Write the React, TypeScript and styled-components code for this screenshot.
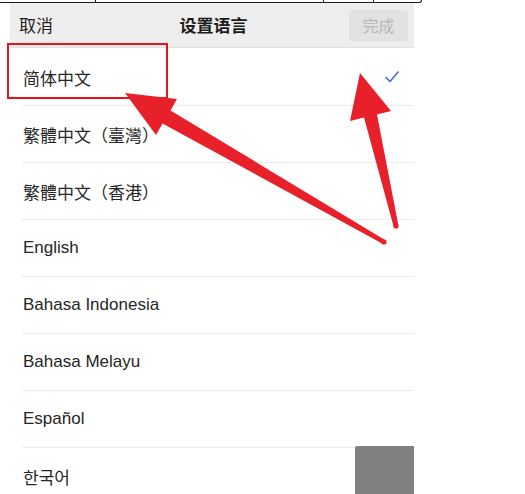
import React from "react";
import styled, { createGlobalStyle } from "styled-components";

const Global = createGlobalStyle`
  html, body { margin: 0; padding: 0; background: #ffffff; overflow: hidden; }
  body { font-family: "Liberation Sans", "Noto Sans CJK SC", "Noto Sans CJK KR", sans-serif; }
`;

const Page = styled.div`
  position: relative;
  width: 525px;
  height: 494px;
  overflow: hidden;
  display: flex;
  flex-direction: column;
`;

const TopRule = styled.div`
  display: flex;
  width: 422px;
  height: 3px;
  flex-shrink: 0;
`;

const RuleCell = styled.div<{ $w: number; $last?: boolean }>`
  width: ${(p) => p.$w}px;
  box-sizing: border-box;
  border-bottom: 1px solid #1e1e1e;
  border-right: 1px solid #1e1e1e;
  border-bottom-right-radius: ${(p) => (p.$last ? "4px" : "0")};
`;

const Screen = styled.div`
  margin-left: 10px;
  width: 404px;
  display: flex;
  flex-direction: column;
`;

const Header = styled.div`
  height: 45px;
  box-sizing: border-box;
  background: #eeeeee;
  border-bottom: 1px solid #e0e0e0;
  display: grid;
  grid-template-columns: 1fr auto 1fr;
  align-items: center;
  padding: 0 6px 2px 9px;
`;

const Cancel = styled.span`
  font-size: 17px;
  color: #222;
  justify-self: start;
`;

const Title = styled.span`
  font-size: 17px;
  font-weight: 700;
  color: #1c1c1c;
`;

const DoneButton = styled.span`
  justify-self: end;
  width: 59px;
  height: 31px;
  margin-top: 2px;
  border-radius: 4px;
  background: #e2e2e2;
  color: #b9b9b9;
  font-size: 16px;
  display: flex;
  align-items: center;
  justify-content: center;
`;

const List = styled.div`
  display: flex;
  flex-direction: column;
  margin-top: 1px;
`;

const Row = styled.div`
  height: 56px;
  margin-left: 12px;
  padding: 0 15px 0 1px;
  border-bottom: 1px solid #ececec;
  display: flex;
  align-items: center;
  justify-content: space-between;
  font-size: 17px;
  color: #262626;
`;

const Overlay = styled.svg`
  position: absolute;
  left: 0;
  top: 0;
  pointer-events: none;
`;

const FloatSquare = styled.div`
  position: absolute;
  left: 355px;
  top: 446px;
  width: 59px;
  height: 60px;
  background: #808080;
  border-top-left-radius: 2px;
`;

const languages = [
  "简体中文",
  "繁體中文（臺灣）",
  "繁體中文（香港）",
  "English",
  "Bahasa Indonesia",
  "Bahasa Melayu",
  "Español",
  "한국어",
];

const Check = () => (
  <svg width="14" height="12" viewBox="0 0 14 12">
    <path d="M1 6.5 L5 10.5 L13 1" fill="none" stroke="#3d6fd6" strokeWidth="1.6" strokeLinecap="round" strokeLinejoin="round" />
  </svg>
);

export default function App() {
  return (
    <>
      <Global />
      <Page>
        <TopRule>
          <RuleCell $w={96} />
          <RuleCell $w={228} />
          <RuleCell $w={50} />
          <RuleCell $w={48} $last />
        </TopRule>
        <Screen>
          <Header>
            <Cancel>取消</Cancel>
            <Title>设置语言</Title>
            <DoneButton>完成</DoneButton>
          </Header>
          <List>
            {languages.map((l, i) => (
              <Row key={l}>
                <span>{l}</span>
                {i === 0 && <Check />}
              </Row>
            ))}
          </List>
        </Screen>
        <FloatSquare />
        <Overlay width="525" height="494" viewBox="0 0 525 494">
          <rect x="8" y="44" width="159" height="54" fill="none" stroke="#e8141c" strokeWidth="2" />
          <polygon
            points="125,93 177,99 170.5,110.5 385,240 383,244 162.5,123.5 156,135"
            fill="#e8202a"
          />
          <circle cx="384" cy="242" r="2.6" fill="#e8202a" />
          <polygon
            points="360,73 391,111 377,114.5 398.4,225.4 393.6,226.6 364,117.5 350,121"
            fill="#e8202a"
          />
          <circle cx="396" cy="226" r="2.6" fill="#e8202a" />
        </Overlay>
      </Page>
    </>
  );
}
